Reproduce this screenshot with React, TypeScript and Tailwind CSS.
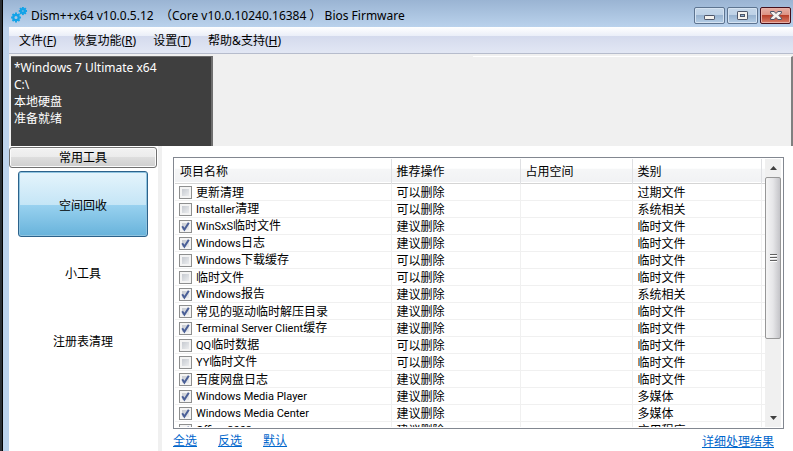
import React from "react";

type Item = { name: string; action: string; kind: string; on: boolean };

const CAN = "可以删除";
const SHOULD = "建议删除";

const items: Item[] = [
  { name: "更新清理", action: CAN, kind: "过期文件", on: false },
  { name: "Installer清理", action: CAN, kind: "系统相关", on: false },
  { name: "WinSxS临时文件", action: SHOULD, kind: "临时文件", on: true },
  { name: "Windows日志", action: SHOULD, kind: "临时文件", on: true },
  { name: "Windows下载缓存", action: CAN, kind: "临时文件", on: false },
  { name: "临时文件", action: CAN, kind: "临时文件", on: false },
  { name: "Windows报告", action: SHOULD, kind: "系统相关", on: true },
  { name: "常见的驱动临时解压目录", action: SHOULD, kind: "临时文件", on: true },
  { name: "Terminal Server Client缓存", action: SHOULD, kind: "临时文件", on: true },
  { name: "QQ临时数据", action: CAN, kind: "临时文件", on: false },
  { name: "YY临时文件", action: CAN, kind: "临时文件", on: false },
  { name: "百度网盘日志", action: SHOULD, kind: "临时文件", on: true },
  { name: "Windows Media Player", action: SHOULD, kind: "多媒体", on: true },
  { name: "Windows Media Center", action: SHOULD, kind: "多媒体", on: true },
  { name: "Office 2003", action: SHOULD, kind: "应用程序", on: true },
];

const menus = [
  { label: "文件", accel: "F" },
  { label: "恢复功能", accel: "R" },
  { label: "设置", accel: "T" },
  { label: "帮助&支持", accel: "H" },
];

function Gear({ cx, cy, r }: { cx: number; cy: number; r: number }) {
  return (
    <g transform={`translate(${cx} ${cy})`} stroke="#12a3e8" fill="none">
      <circle r={r} strokeWidth="2.3" />
      {[0, 45, 90, 135, 180, 225, 270, 315].map((a) => (
        <path key={a} d={`M0 ${-r - 0.5}V${-r - 2.2}`} strokeWidth="1.9" transform={`rotate(${a})`} />
      ))}
    </g>
  );
}

function TitleBar() {
  return (
    <header className="flex h-[27px] items-start px-[2px]">
      <svg className="mt-[7px] shrink-0" width="16" height="16" viewBox="0 0 16 16" aria-hidden="true">
        <Gear cx={5} cy={10.5} r={2.7} />
        <Gear cx={11.9} cy={4} r={1.9} />
      </svg>
      <h1 className="ml-1 flex-1 pt-2 text-[12px] leading-4 whitespace-pre text-black">
        {"Dism++x64 v10.0.5.12  （Core v10.0.10240.16384 ） Bios Firmware"}
      </h1>
      <div className="mt-[7px] flex gap-[2px]">
        <button
          aria-label="最小化"
          className="flex h-[17px] w-[31px] items-center justify-center rounded-[2px] border border-[#5d7490] bg-[linear-gradient(#c5d7ea,#bdd1e6_50%,#98b3d0_50%,#b5cee6)] shadow-[inset_0_0_0_1px_#d5e3f2]"
        >
          <svg width="11" height="5" viewBox="0 0 11 5" className="mt-1">
            <rect x=".5" y=".5" width="10" height="4" rx=".6" fill="#f4f2ee" stroke="#4d5568" />
          </svg>
        </button>
        <button
          aria-label="最大化"
          className="flex h-[17px] w-[31px] items-center justify-center rounded-[2px] border border-[#5d7490] bg-[linear-gradient(#c5d7ea,#bdd1e6_50%,#98b3d0_50%,#b5cee6)] shadow-[inset_0_0_0_1px_#d5e3f2]"
        >
          <svg width="11" height="9" viewBox="0 0 11 9">
            <rect x=".5" y=".5" width="10" height="8" rx=".6" fill="#f4f2ee" stroke="#4d5568" />
            <rect x="3.5" y="3.5" width="4" height="2" fill="#8fb0d0" stroke="#4d5568" />
          </svg>
        </button>
        <button
          aria-label="关闭"
          className="flex h-[17px] w-[31px] items-center justify-center rounded-[2px] border border-[#45101c] bg-[linear-gradient(#e6b0a6,#dc8f80_50%,#b8402a_50%,#d8806c)] shadow-[inset_0_0_0_1px_#e8b0a6]"
        >
          <svg width="12" height="9" viewBox="0 0 12 9">
            <path
              d="M.6 .5H4L6 2.4 8 .5H11.4V2L8.9 4.5 11.4 7V8.5H8L6 6.6 4 8.5H.6V7L3.1 4.5.6 2Z"
              fill="#f4f2ee"
              stroke="#4d5568"
            />
          </svg>
        </button>
      </div>
    </header>
  );
}

function MenuBar() {
  return (
    <nav className="flex h-[27px] shrink-0 gap-px border-b border-[#b6bccc] bg-[linear-gradient(#ffffff,#eaeef8_35%,#d4daed_35%,#e2e7f4)] pl-[2px]">
      {menus.map((m) => (
        <button key={m.accel} className="px-2 pt-px text-[12px] leading-[25px] text-black">
          {m.label}(<u className="underline-offset-1">{m.accel}</u>)
        </button>
      ))}
    </nav>
  );
}

function Systems() {
  return (
    <section className="flex h-[92px] shrink-0 bg-[#f0f0f0] pt-[2px] pl-[2px]">
      <div className="w-[202px] border-t border-r-2 border-t-[#696969] border-r-[#6e6e6e] bg-[#3f3f3f] px-[3px] pt-[2px] text-[12px] leading-[17px] text-white">
        <p>*Windows 7 Ultimate x64</p>
        <p>C:\</p>
        <p>本地硬盘</p>
        <p>准备就绪</p>
      </div>
      <div className="w-[260px] shrink-0" />
      <div className="flex-1 border-t border-r-2 border-t-white border-r-[#808080]" />
    </section>
  );
}

function Sidebar() {
  return (
    <aside className="flex w-[153px] shrink-0 flex-col border-r-4 border-[#f0f0f0] pt-px">
      <button className="mr-px h-[21px] rounded-[3px] border border-[#707070] bg-[linear-gradient(#f2f2f2,#ebebeb_50%,#dddddd_50%,#cfcfcf)] pt-px text-[12px] leading-[18px] shadow-[inset_0_0_0_1px_#fbfbfb]">
        常用工具
      </button>
      <div className="flex flex-col gap-[2px] pt-[3px] pr-[10px] pl-[9px] text-[12px]">
        <button className="h-[66px] rounded-[3px] border border-[#2c628b] bg-[linear-gradient(#e5f4fc,#c4e5f6_52%,#98d1ef_52%,#68b3db)] pt-[3px] shadow-[inset_0_0_0_1px_#8fc4e0]">
          空间回收
        </button>
        <button className="h-[66px] pt-[3px]">小工具</button>
        <button className="h-[66px] pt-[3px]">注册表清理</button>
      </div>
    </aside>
  );
}

/** Sets the Latin run of a name in a narrower face than the Chinese text after it. */
function ItemName({ text }: { text: string }) {
  const latin = text.match(/^[\x20-\x7e]+/)?.[0] ?? "";
  return (
    <span>
      {latin && <span className="font-[Roboto,sans-serif] text-[11px]">{latin}</span>}
      {text.slice(latin.length)}
    </span>
  );
}

function Row({ item }: { item: Item }) {
  return (
    <tr className="h-[17px] border-b border-[#f0f0f0]">
      <td className="border-r border-[#f0f0f0] p-0 pl-1">
        <label className="flex h-4 items-center gap-1 pt-px">
          <span className="relative flex size-[13px]">
            <input
              type="checkbox"
              defaultChecked={item.on}
              className="peer size-[13px] appearance-none border border-[#8e8f8f] bg-linear-to-br from-[#bcc1c8] to-[#f6f6f7] shadow-[inset_0_0_0_2px_#f4f4f4]"
            />
            <svg
              viewBox="0 0 13 13"
              className="pointer-events-none absolute inset-0 hidden size-[13px] peer-checked:block"
            >
              <path d="M3.2 6.2 5.4 9.6 9.8 2.8" fill="none" stroke="#4a5f97" strokeWidth="2" />
            </svg>
          </span>
          <ItemName text={item.name} />
        </label>
      </td>
      <td className="border-r border-[#f0f0f0] p-0 pt-px pl-[5px]">{item.action}</td>
      <td className="border-r border-[#f0f0f0] p-0" />
      <td className="border-r border-[#f0f0f0] p-0 pt-px pl-[5px]">{item.kind}</td>
      <td className="p-0" />
    </tr>
  );
}

function ScrollBar() {
  return (
    <div className="flex w-4 shrink-0 flex-col bg-[#f0f0f0]" aria-hidden="true">
      <div className="flex h-[18px] items-center justify-center">
        <svg width="7" height="4" viewBox="0 0 7 4">
          <path d="M0 4 3.5 0 7 4Z" fill="#404040" />
        </svg>
      </div>
      <div className="flex h-[162px] flex-col items-center justify-center gap-px rounded-[2px] border border-[#979797] bg-linear-to-r from-[#f5f5f5] via-[#e6e6e8] to-[#c4c4c8]">
        <i className="h-[2px] w-[7px] border-t border-[#606060] bg-white" />
        <i className="h-[2px] w-[7px] border-t border-[#606060] bg-white" />
        <i className="h-[2px] w-[7px] border-t border-[#606060] bg-white" />
      </div>
      <div className="flex flex-1 items-end justify-center pb-[7px]">
        <svg width="7" height="4" viewBox="0 0 7 4">
          <path d="M0 0 3.5 4 7 0Z" fill="#404040" />
        </svg>
      </div>
    </div>
  );
}

function ItemList() {
  return (
    <div className="flex min-h-0 flex-1 border border-[#828790] p-px pr-[2px]">
      <div className="min-w-0 flex-1 overflow-hidden">
        <table className="w-full table-fixed border-collapse text-left text-[12px] leading-[15px] whitespace-nowrap text-black">
          <colgroup>
            <col className="w-[216px]" />
            <col className="w-[129px]" />
            <col className="w-[112px]" />
            <col />
            <col className="w-[4px]" />
          </colgroup>
          <thead>
            <tr className="h-6 border-b border-[#d5d5d5] bg-[linear-gradient(#ffffff_40%,#f5f6f7_45%,#f1f2f4)]">
              <th className="border-r border-[#dfe0e3] p-0 pt-[2px] pl-[5px] font-normal">项目名称</th>
              <th className="border-r border-[#dfe0e3] p-0 pt-[2px] pl-[5px] font-normal">推荐操作</th>
              <th className="border-r border-[#dfe0e3] p-0 pt-[2px] pl-[5px] font-normal">占用空间</th>
              <th className="border-r border-[#dfe0e3] p-0 pt-[2px] pl-[5px] font-normal">类别</th>
              <th className="p-0" />
            </tr>
          </thead>
          <tbody>
            {items.map((item) => (
              <Row key={item.name} item={item} />
            ))}
          </tbody>
        </table>
      </div>
      <ScrollBar />
    </div>
  );
}

export default function App() {
  return (
    <div className="flex h-screen overflow-hidden bg-white font-['Noto_Sans','Noto_Sans_CJK_SC',sans-serif] text-black">
      <div className="w-[3px] shrink-0 border-r border-black bg-[#2b2f33]" />
      <div className="flex min-w-0 flex-1 flex-col bg-[#bdd3ec]">
        <div className="flex shrink-0 flex-col bg-linear-to-b from-[#9ab4d3] to-[#bad2ec] pl-[6px]">
          <TitleBar />
        </div>
        <div className="ml-[6px] flex min-h-0 flex-1 flex-col bg-white">
          <MenuBar />
          <Systems />
          <div className="flex min-h-0 flex-1">
            <Sidebar />
            <main className="flex min-w-0 flex-1 flex-col pt-[11px] pr-[9px] pl-[11px]">
              <ItemList />
              <div className="flex h-[22px] shrink-0 justify-between pt-px pr-[10px] text-[12px] leading-[22px] text-[#0066cc] underline">
                <div className="flex gap-[21px]">
                  <a href="#all">全选</a>
                  <a href="#invert">反选</a>
                  <a href="#default">默认</a>
                </div>
                <a href="#details" className="pt-px">详细处理结果</a>
              </div>
            </main>
          </div>
        </div>
      </div>
    </div>
  );
}
